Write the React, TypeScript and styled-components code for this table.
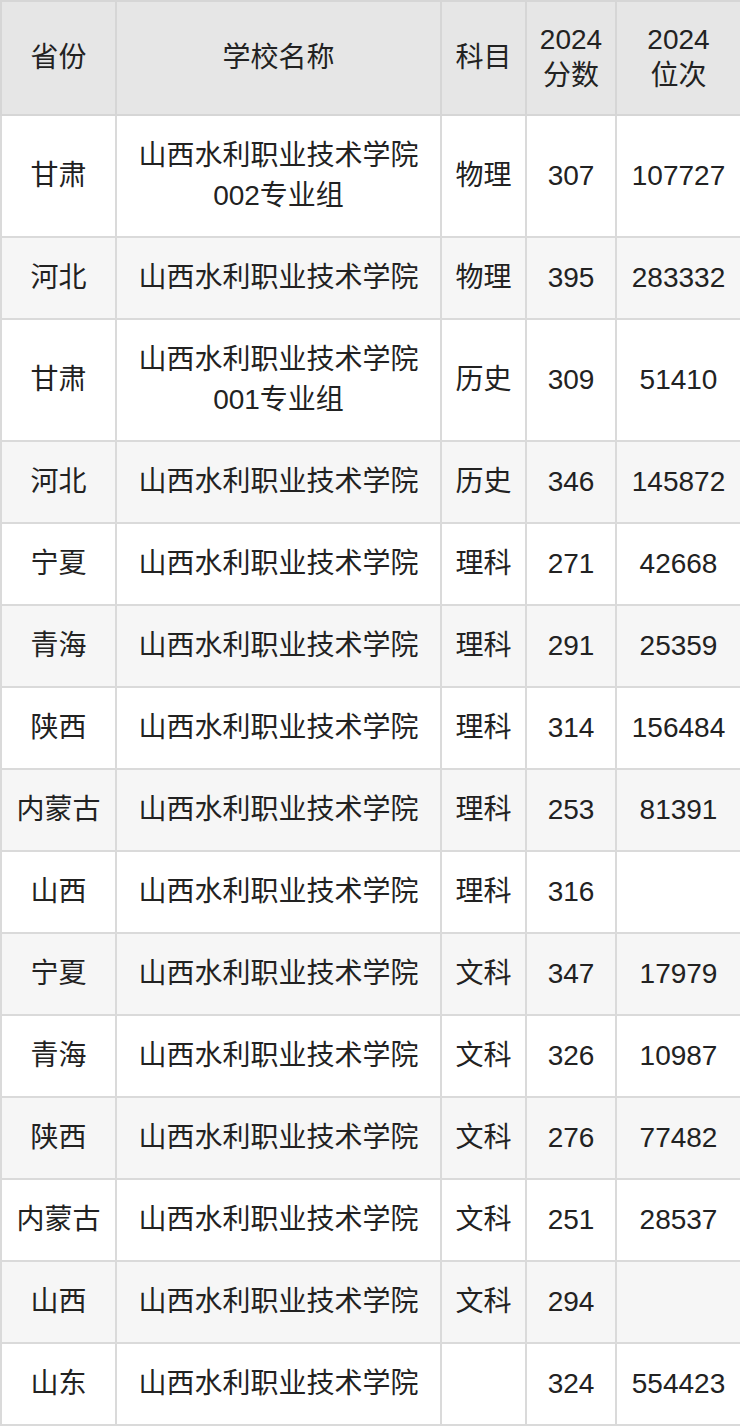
import styled, { createGlobalStyle } from 'styled-components';

type Row = {
    province: string
    school: string[]
    subject: string
    score: string
    rank: string
}

const rows: Row[] = [
    { province: '甘肃', school: ['山西水利职业技术学院', '002专业组'], subject: '物理', score: '307', rank: '107727' },
    { province: '河北', school: ['山西水利职业技术学院'], subject: '物理', score: '395', rank: '283332' },
    { province: '甘肃', school: ['山西水利职业技术学院', '001专业组'], subject: '历史', score: '309', rank: '51410' },
    { province: '河北', school: ['山西水利职业技术学院'], subject: '历史', score: '346', rank: '145872' },
    { province: '宁夏', school: ['山西水利职业技术学院'], subject: '理科', score: '271', rank: '42668' },
    { province: '青海', school: ['山西水利职业技术学院'], subject: '理科', score: '291', rank: '25359' },
    { province: '陕西', school: ['山西水利职业技术学院'], subject: '理科', score: '314', rank: '156484' },
    { province: '内蒙古', school: ['山西水利职业技术学院'], subject: '理科', score: '253', rank: '81391' },
    { province: '山西', school: ['山西水利职业技术学院'], subject: '理科', score: '316', rank: '' },
    { province: '宁夏', school: ['山西水利职业技术学院'], subject: '文科', score: '347', rank: '17979' },
    { province: '青海', school: ['山西水利职业技术学院'], subject: '文科', score: '326', rank: '10987' },
    { province: '陕西', school: ['山西水利职业技术学院'], subject: '文科', score: '276', rank: '77482' },
    { province: '内蒙古', school: ['山西水利职业技术学院'], subject: '文科', score: '251', rank: '28537' },
    { province: '山西', school: ['山西水利职业技术学院'], subject: '文科', score: '294', rank: '' },
    { province: '山东', school: ['山西水利职业技术学院'], subject: '', score: '324', rank: '554423' },
]

const App = () => {
    return (
        <>
            <GlobalStyle />
            <Table>
                <colgroup>
                    <col style={{ width: 115 }} />
                    <col style={{ width: 325 }} />
                    <col style={{ width: 85 }} />
                    <col style={{ width: 90 }} />
                    <col style={{ width: 125 }} />
                </colgroup>
                <thead>
                    <tr>
                        <HeadCell>省份</HeadCell>
                        <HeadCell>学校名称</HeadCell>
                        <HeadCell>科目</HeadCell>
                        <HeadCell>2024<br />分数</HeadCell>
                        <HeadCell>2024<br />位次</HeadCell>
                    </tr>
                </thead>
                <tbody>
                    {rows.map((r, i) => (
                        <BodyRow key={i} $striped={i % 2 === 1}>
                            <Cell>{r.province}</Cell>
                            <Cell>
                                {r.school.map((line, j) => (
                                    <Line key={j}>{line}</Line>
                                ))}
                            </Cell>
                            <Cell>{r.subject}</Cell>
                            <Cell>{r.score}</Cell>
                            <Cell>{r.rank}</Cell>
                        </BodyRow>
                    ))}
                </tbody>
            </Table>
        </>
    )
}

const GlobalStyle = createGlobalStyle`
    body {
        margin: 0;
        background: #fff;
        font-family: "Liberation Sans", "Noto Sans CJK SC", sans-serif;
        color: #222;
    }
`;

const Table = styled.table`
    width: 740px;
    table-layout: fixed;
    border-collapse: collapse;
    font-size: 28px;
`;

const HeadCell = styled.th`
    background-color: #e6e6e6;
    border: 2px solid #d6d6d6;
    padding: 20px 2px;
    line-height: 36px;
    font-weight: normal;
    text-align: center;
`;

const BodyRow = styled.tr<{ $striped: boolean }>`
    background-color: ${p => (p.$striped ? '#f6f6f6' : '#fff')};
`;

const Cell = styled.td`
    border: 2px solid #dadada;
    padding: 20px 2px;
    line-height: 40px;
    text-align: center;
`;

const Line = styled.div`
    white-space: nowrap;
`;

export default App
